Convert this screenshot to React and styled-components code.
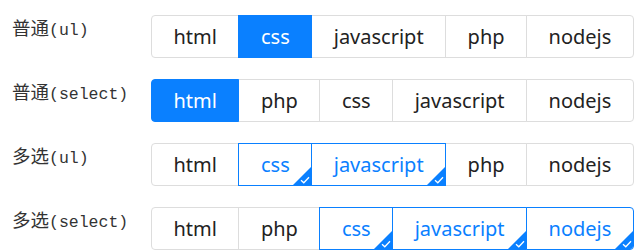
import React, { useState } from "react";
import styled, { createGlobalStyle, css } from "styled-components";

const BLUE = "#0a80ff";

const GlobalStyle = createGlobalStyle`
  body {
    margin: 0;
    background: #fff;
  }
`;

const Page = styled.div`
  display: flex;
  flex-direction: column;
  gap: 21px;
  padding: 15px 0 0 12px;
`;

const Row = styled.div`
  display: flex;
  align-items: flex-start;
`;

const Label = styled.div`
  width: 139px;
  flex-shrink: 0;
  line-height: 25px;
  font-family: "Liberation Mono", "Noto Sans CJK SC", monospace;
  font-size: 16.5px;
  color: #333;
`;

const Han = styled.span`
  font-family: "Noto Sans CJK SC", sans-serif;
  font-size: 18.5px;
  font-weight: 400;
`;

const Group = styled.ul`
  display: inline-flex;
  margin: 0;
  padding: 0;
  list-style: none;
`;

const Cell = styled.li`
  position: relative;
  height: 41px;
  padding: 0 21.5px;
  margin-left: -1px;
  border: 1px solid #ddd;
  display: flex;
  align-items: center;
  justify-content: center;
  font-family: "Noto Sans", sans-serif;
  font-size: 20px;
  color: #222;
  background: #fff;
  cursor: pointer;
  overflow: hidden;

  &:first-child {
    margin-left: 0;
    border-radius: 4px 0 0 4px;
  }
  &:last-child {
    border-radius: 0 4px 4px 0;
  }

  ${(p) =>
    p.$active &&
    css`
      z-index: 1;
      border-color: ${BLUE};
      background: ${BLUE};
      color: #fff;
    `}

  ${(p) =>
    p.$checked &&
    css`
      z-index: 1;
      border-color: ${BLUE};
      color: ${BLUE};
    `}
`;

const Corner = styled.span`
  position: absolute;
  right: 0;
  bottom: 0;
  width: 0;
  height: 0;
  border-style: solid;
  border-width: 0 0 18px 18px;
  border-color: transparent transparent ${BLUE} transparent;
`;

const Tick = styled.svg`
  position: absolute;
  right: 1px;
  bottom: 1px;
  width: 10px;
  height: 8px;
`;

const langs = ["html", "css", "javascript", "php", "nodejs"];
const langs2 = ["html", "php", "css", "javascript", "nodejs"];

function Check() {
  return (
    <>
      <Corner />
      <Tick viewBox="0 0 10 8">
        <path d="M1 4.2 L3.8 6.8 L9 1.2" fill="none" stroke="#fff" strokeWidth="1.3" />
      </Tick>
    </>
  );
}

function Single({ items, initial }) {
  const [value, setValue] = useState(initial);
  return (
    <Group>
      {items.map((it) => (
        <Cell key={it} $active={value === it} onClick={() => setValue(it)}>
          {it}
        </Cell>
      ))}
    </Group>
  );
}

function Multi({ items, initial }) {
  const [values, setValues] = useState(initial);
  const toggle = (it) =>
    setValues((v) => (v.includes(it) ? v.filter((x) => x !== it) : [...v, it]));
  return (
    <Group>
      {items.map((it) => {
        const on = values.includes(it);
        return (
          <Cell key={it} $checked={on} onClick={() => toggle(it)}>
            {it}
            {on && <Check />}
          </Cell>
        );
      })}
    </Group>
  );
}

export default function App() {
  return (
    <>
      <GlobalStyle />
      <Page>
        <Row>
          <Label><Han>普通</Han>(ul)</Label>
          <Single items={langs} initial="css" />
        </Row>
        <Row>
          <Label><Han>普通</Han>(select)</Label>
          <Single items={langs2} initial="html" />
        </Row>
        <Row>
          <Label><Han>多选</Han>(ul)</Label>
          <Multi items={langs} initial={["css", "javascript"]} />
        </Row>
        <Row>
          <Label><Han>多选</Han>(select)</Label>
          <Multi items={langs2} initial={["css", "javascript", "nodejs"]} />
        </Row>
      </Page>
    </>
  );
}
